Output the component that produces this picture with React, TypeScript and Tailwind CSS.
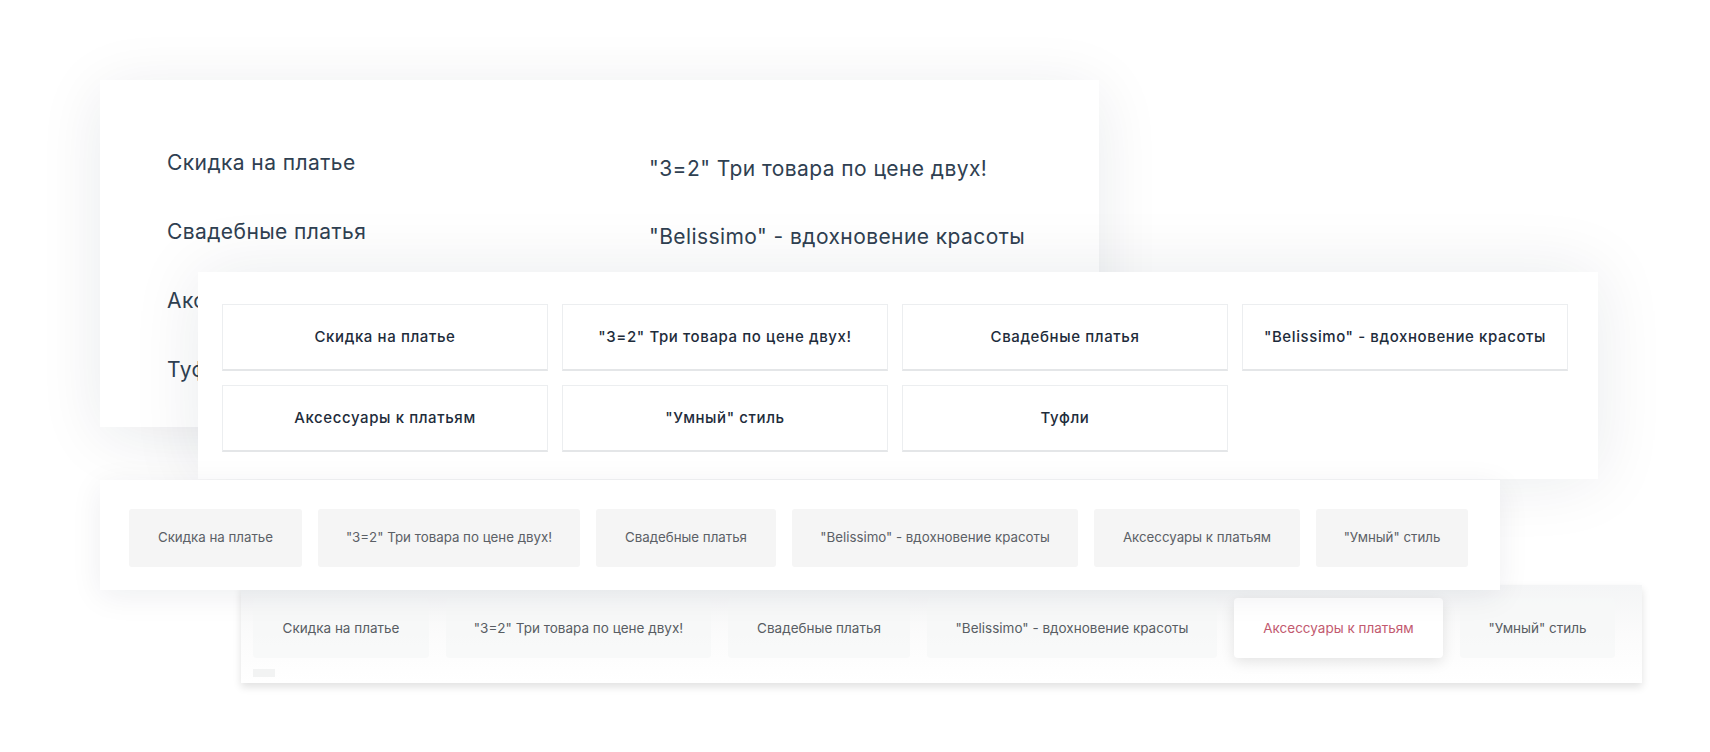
import React from "react";

const grid1 = [
  "Скидка на платье",
  "\"3=2\" Три товара по цене двух!",
  "Свадебные платья",
  "\"Belissimo\" - вдохновение красоты",
  "Аксессуары к платьям",
  "\"Умный\" стиль",
  "Туфли",
];

const pills3: [string, number][] = [
  ["Скидка на платье", 173],
  ["\"3=2\" Три товара по цене двух!", 262],
  ["Свадебные платья", 180],
  ["\"Belissimo\" - вдохновение красоты", 286],
  ["Аксессуары к платьям", 206],
  ["\"Умный\" стиль", 152],
];

const pills4: [string, number][] = [
  ["Скидка на платье", 176],
  ["\"3=2\" Три товара по цене двух!", 265],
  ["Свадебные платья", 182],
  ["\"Belissimo\" - вдохновение красоты", 290],
  ["Аксессуары к платьям", 209],
  ["\"Умный\" стиль", 155],
];

export default function App() {
  return (
    <div
      className="relative w-[1710px] h-[752px] overflow-hidden bg-white"
      style={{ fontFamily: "Inter, 'Noto Sans', sans-serif" }}
    >
      {/* Panel 1: plain list */}
      <div className="absolute left-[100px] top-[80px] w-[999px] h-[347px] bg-white z-[1] shadow-[0_10px_60px_rgba(20,30,50,0.09)]">
        <div className="grid grid-cols-[482px_1fr] pl-[67px] pt-[69px] text-[21px] tracking-[0.02em] leading-[28px] text-[#2f4051]">
          <div className="flex flex-col gap-[41px]">
            <span>Скидка на платье</span>
            <span>Свадебные платья</span>
            <span>Аксессуары к платьям</span>
            <span>Туфли</span>
          </div>
          <div className="flex flex-col gap-[40px] pt-[6px]">
            <span>"3=2" Три товара по цене двух!</span>
            <span>"Belissimo" - вдохновение красоты</span>
          </div>
        </div>
      </div>

      {/* Panel 4: tabs with active */}
      <div className="absolute left-[241px] top-[585px] w-[1401px] h-[98px] z-[2] bg-gradient-to-b from-[#f4f5f6] via-[#fbfbfb] to-white shadow-[0_4px_8px_rgba(0,0,0,0.12)]">
        <div className="flex gap-[17px] pl-[12px] pt-[13px]">
          {pills4.map(([t, w], i) =>
            i === 4 ? (
              <div
                key={t}
                className="h-[60px] flex items-center justify-center rounded-[4px] bg-white text-[13.5px] text-[#c25a6f] shadow-[0_4px_14px_rgba(0,0,0,0.1)]"
                style={{ width: w }}
              >
                {t}
              </div>
            ) : (
              <div
                key={t}
                className="h-[60px] flex items-center justify-center rounded-[4px] bg-[#f6f7f7]/80 text-[13.5px] text-[#585d63]"
                style={{ width: w }}
              >
                {t}
              </div>
            )
          )}
        </div>
        <div className="ml-[12px] mt-[11px] w-[22px] h-[8px] bg-[#f2f3f3]" />
      </div>

      {/* Panel 2: bordered grid */}
      <div className="absolute left-[198px] top-[272px] w-[1400px] h-[207px] bg-white z-[3] shadow-[0_0_70px_rgba(20,30,50,0.09)]">
        <div className="grid grid-cols-[repeat(4,326px)] gap-[14px] pl-[24px] pt-[32px]">
          {grid1.map((t) => (
            <div
              key={t}
              className="h-[67px] flex items-center justify-center border border-[#eceef0] border-b-[#e4e6e8] border-b-2 text-[15px] tracking-[0.04em] font-medium text-[#1e2c3b]"
            >
              {t}
            </div>
          ))}
        </div>
      </div>

      {/* Panel 3: pills */}
      <div className="absolute left-[100px] top-[480px] w-[1400px] h-[110px] bg-white z-[4] shadow-[0_6px_30px_rgba(20,30,50,0.07)]">
        <div className="flex gap-[16px] pl-[29px] pt-[29px]">
          {pills3.map(([t, w]) => (
            <div
              key={t}
              className="h-[58px] flex items-center justify-center rounded-[3px] bg-[#f5f5f5] text-[13.3px] text-[#5b6066]"
              style={{ width: w }}
            >
              {t}
            </div>
          ))}
        </div>
      </div>
    </div>
  );
}
